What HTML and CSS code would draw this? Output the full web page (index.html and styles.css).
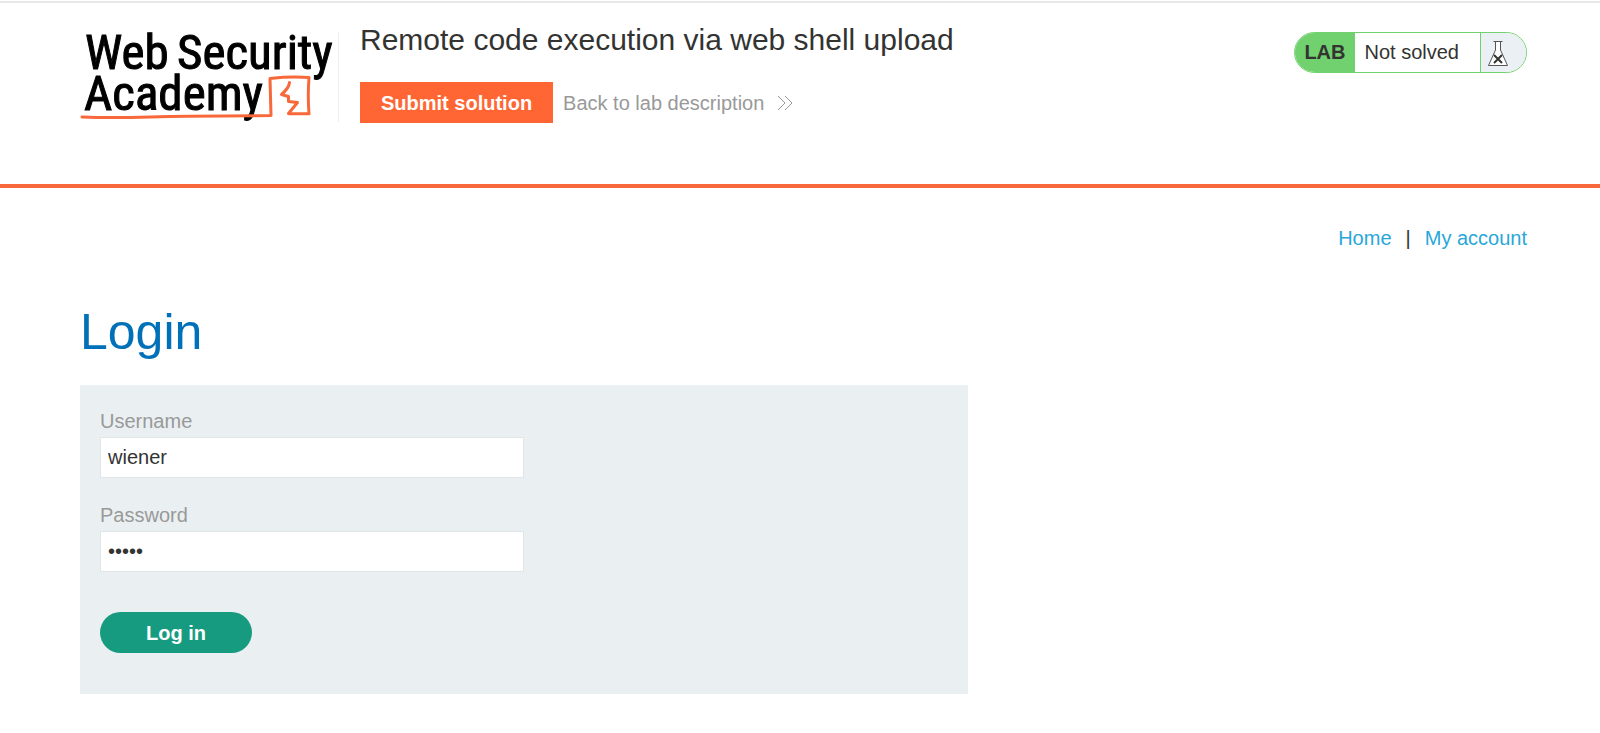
FILE: index.html
```
<!DOCTYPE html>
<html lang="en">
<head>
<meta charset="utf-8">
<meta name="viewport" content="width=device-width, initial-scale=1">
<title>Remote code execution via web shell upload</title>
<link rel="stylesheet" href="styles.css">
</head>
<body>
<header class="lab-header">
  <div class="container lab-header-row">
    <a class="logo" href="#" aria-label="Web Security Academy">
      <svg width="258" height="90" viewBox="80 32 258 90">
        <g class="logo-text">
          <text x="85" y="69">Web</text>
          <text x="177" y="69">Security</text>
          <text x="84" y="110">Academy</text>
        </g>
        <path d="M82 117 Q110 118 150 117 T225 116 L271 115.500 L270 78.400 Q290 76.400 309 77.500 Q307.600 96 309 113.800 L289 113.800" fill="none" stroke="#f9683a" stroke-width="3" stroke-linejoin="round" stroke-linecap="round"/>
        <path d="M289.500 82.500 Q289 88 281.500 94.500 L288.500 96.500 L288.500 101.500 L297.500 102.500 L288.500 113.500" fill="none" stroke="#f9683a" stroke-width="3" stroke-linejoin="round" stroke-linecap="round"/>
      </svg>
    </a>
    <div class="title-block">
      <h2>Remote code execution via web shell upload</h2>
      <div class="actions">
        <button class="submit" type="button">Submit solution</button>
        <a class="back" href="#">Back to lab description
          <svg width="16" height="16" viewBox="0 0 16 16" aria-hidden="true"><path d="M1 1l7 7-7 7M8 1l7 7-7 7" fill="none" stroke="#999999" stroke-width="1"/></svg>
        </a>
      </div>
    </div>
    <div class="status">
      <span class="status-tag">LAB</span>
      <span class="status-text">Not solved</span>
      <span class="status-icon">
        <svg width="22" height="28" viewBox="0 0 22 28" aria-hidden="true">
          <path d="M6.500 2.500H15.500M8.500 2.500V11L1.500 26.500H20.500L13.500 11V2.500" fill="#ffffff" stroke="#555555" stroke-width="1"/>
          <path d="M7 16l8 8M15 16l-8 8" fill="none" stroke="#333332" stroke-width="2"/>
        </svg>
      </span>
    </div>
  </div>
</header>
<main class="container">
  <nav class="top-links">
    <a href="#">Home</a><span>|</span><a href="#">My account</a>
  </nav>
  <h1>Login</h1>
  <form class="login-form">
    <label for="username">Username</label>
    <input id="username" type="text" value="wiener">
    <label for="password">Password</label>
    <input id="password" type="password" value="peter">
    <button class="login" type="button">Log in</button>
  </form>
</main>
</body>
</html>
```
FILE: styles.css
```
* {
  box-sizing: border-box;
}

body {
  margin: 0;
  background: #ffffff;
  color: #333332;
  font: 20px/24px "Liberation Sans", Arial, sans-serif;
}

a {
  text-decoration: none;
}

button,
input {
  font: inherit;
}

.container {
  padding: 0 73px 0 80px;
}

.lab-header {
  margin-top: 1px;
  border-top: 2px solid #e8e8e8;
  border-bottom: 4px solid #f9683a;
}

.lab-header-row {
  display: flex;
  align-items: flex-start;
  padding-top: 18px;
  padding-bottom: 61px;
}

.logo {
  display: flex;
  margin-top: 11px;
  border-right: 1px solid #eeeeee;
}

.logo svg {
  overflow: visible;
}

.logo-text {
  font-family: "Roboto Condensed", "Liberation Sans Narrow", Roboto, sans-serif;
  font-size: 49px;
  fill: #000000;
  stroke: #000000;
  stroke-width: 1px;
}

.title-block {
  flex: 1;
  padding-left: 21px;
}

h2 {
  margin: 0 0 23px;
  font-size: 30px;
  font-weight: 400;
  line-height: 38px;
}

.actions {
  display: flex;
  align-items: center;
  gap: 10px;
}

.submit {
  height: 41px;
  padding: 0 21px;
  border: 0;
  background: #ff6633;
  color: #ffffff;
  font-weight: 700;
}

.back {
  display: flex;
  align-items: center;
  gap: 13px;
  color: #999999;
}

.status {
  display: flex;
  height: 41px;
  margin-top: 11px;
  border: 1px solid #71d16e;
  border-radius: 21px;
  overflow: hidden;
  line-height: 39px;
}

.status-tag {
  padding: 0 9px;
  background: #71d16e;
  font-weight: 700;
}

.status-text {
  padding: 0 21px 0 10px;
}

.status-icon {
  display: flex;
  align-items: center;
  width: 46px;
  padding-left: 6px;
  border-left: 1px solid #71d16e;
  background: #eaf0f3;
}

.top-links {
  display: flex;
  justify-content: flex-end;
  gap: 14px;
  padding-top: 38px;
}

.top-links a {
  color: #29a7d9;
}

h1 {
  margin: 54px 0 25px;
  color: #0071b8;
  font-size: 50px;
  font-weight: 400;
  line-height: 56px;
}

.login-form {
  display: flex;
  flex-direction: column;
  align-items: flex-start;
  max-width: 888px;
  padding: 24px 20px 41px;
  background: #eaf0f2;
}

.login-form label {
  margin-bottom: 4px;
  color: #999999;
}

.login-form input {
  width: 50%;
  height: 41px;
  margin-bottom: 25px;
  padding: 0 7px;
  border: 1px solid #e0e6e8;
  background: #ffffff;
  color: #333332;
}

.login {
  width: 152px;
  height: 41px;
  margin-top: 15px;
  border: 0;
  border-radius: 21px;
  background: #179b80;
  color: #ffffff;
  font-weight: 700;
}
```
